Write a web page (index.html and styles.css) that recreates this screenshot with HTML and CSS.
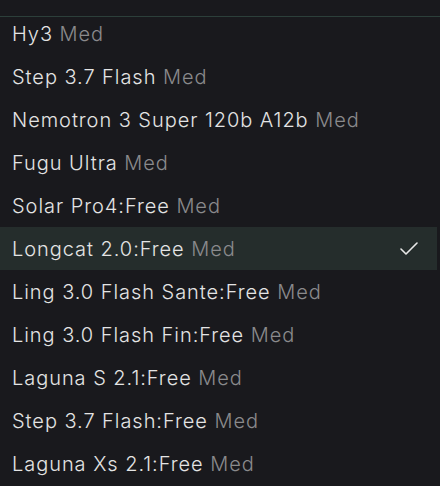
FILE: index.html
```html
<!DOCTYPE html>
<html lang="en">

<head>
  <meta charset="UTF-8">
  <title>Model picker</title>
  <link rel="stylesheet" href="styles.css">
</head>

<body>
  <div class="menu">
    <div class="menu-top"></div>
    <div class="viewport">
      <ul class="list">
        <li class="item">Hy3 <span class="tag">Med</span></li>
        <li class="item">Step 3.7 Flash <span class="tag">Med</span></li>
        <li class="item">Nemotron 3 Super 120b A12b <span class="tag">Med</span></li>
        <li class="item">Fugu Ultra <span class="tag">Med</span></li>
        <li class="item">Solar Pro4:Free <span class="tag">Med</span></li>
        <li class="item selected">Longcat 2.0:Free <span class="tag">Med</span>
          <svg class="check" width="18" height="13" viewBox="0 0 18 13"><path d="M1 7l5 5L17 1" fill="none" stroke="#e8e8e8" stroke-width="1.6" stroke-linecap="round" stroke-linejoin="round"/></svg>
        </li>
        <li class="item">Ling 3.0 Flash Sante:Free <span class="tag">Med</span></li>
        <li class="item">Ling 3.0 Flash Fin:Free <span class="tag">Med</span></li>
        <li class="item">Laguna S 2.1:Free <span class="tag">Med</span></li>
        <li class="item">Step 3.7 Flash:Free <span class="tag">Med</span></li>
        <li class="item">Laguna Xs 2.1:Free <span class="tag">Med</span></li>
      </ul>
    </div>
  </div>
</body>

</html>
```

FILE: styles.css
```css
html,
body {
  margin: 0;
  padding: 0;
  height: 100%;
  background: #19191d;
  overflow: hidden;
}

.menu {
  font-family: Inter, "Noto Sans", sans-serif;
  color: #e4e4e4;
}

.menu-top {
  height: 16px;
  border-bottom: 1px solid #2c3f3a;
  position: relative;
  z-index: 1;
}

.viewport {
  overflow: hidden;
  height: 469px;
}

.list {
  list-style: none;
  margin: -5px 3px 0 0;
  padding: 0;
}

.item {
  height: 43px;
  display: flex;
  align-items: center;
  padding-left: 12px;
  font-size: 20px;
  font-weight: 300;
  letter-spacing: 0.95px;
  white-space: pre;
}

.tag {
  color: #8a8a8c;
}

.selected {
  background: #252d2c;
}

.check {
  margin-left: auto;
  margin-right: 19px;
}
```
